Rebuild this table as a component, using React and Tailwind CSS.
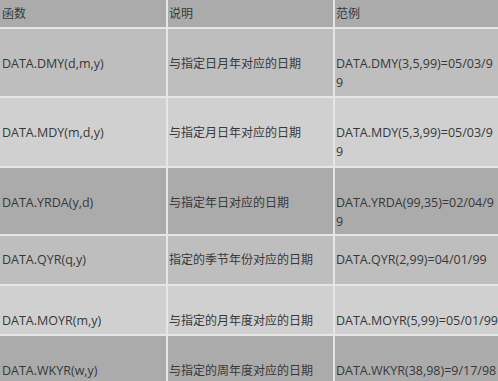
export default function App() {
  const rows = [
    { bg: "bg-[#bebebe]", h: "h-[67px]", pt: "pt-[25px]", a: "DATA.DMY(d,m,y)", b: "与指定日月年对应的日期", c: ["DATA.DMY(3,5,99)=05/03/9", "9"] },
    { bg: "bg-[#d0d0d0]", h: "h-[68px]", pt: "pt-[25px]", a: "DATA.MDY(m,d,y)", b: "与指定月日年对应的日期", c: ["DATA.MDY(5,3,99)=05/03/9", "9"] },
    { bg: "bg-[#ababab]", h: "h-[66px]", pt: "pt-[25px]", a: "DATA.YRDA(y,d)", b: "与指定年日对应的日期", c: ["DATA.YRDA(99,35)=02/04/9", "9"] },
    { bg: "bg-[#bebebe]", h: "h-[48px]", pt: "pt-[14px]", a: "DATA.QYR(q,y)", b: "指定的季节年份对应的日期", c: ["DATA.QYR(2,99)=04/01/99"] },
    { bg: "bg-[#d0d0d0]", h: "h-[48px]", pt: "pt-[25px]", a: "DATA.MOYR(m,y)", b: "与指定的月年度对应的日期", c: ["DATA.MOYR(5,99)=05/01/99"] },
    { bg: "bg-[#ababab]", h: "h-[60px]", pt: "pt-[25px]", a: "DATA.WKYR(w,y)", b: "与指定的周年度对应的日期", c: ["DATA.WKYR(38,98)=9/17/98"] },
  ];
  const font = { fontFamily: '"Open Sans", "Noto Sans CJK SC", sans-serif' };
  return (
    <div className="w-[498px] h-[381px] overflow-hidden bg-[#e6e6e6] leading-[19px] text-[#383838]" style={font}>
      <div className="grid grid-cols-[166px_165px_200px] gap-[2px] w-[535px]">
        <div className="bg-[#ababab] h-[27px] pt-[4px] pl-[2px] text-[12px]">函数</div>
        <div className="bg-[#ababab] h-[27px] pt-[4px] pl-[1px] text-[12px]">说明</div>
        <div className="bg-[#ababab] h-[27px] pt-[4px] pl-[1px] text-[12px]">范例</div>
        {rows.map((r, i) => (
          <>
            <div key={i + "a"} className={`${r.bg} ${r.h} ${r.pt} pl-[2px] whitespace-nowrap text-[12.5px]`}>{r.a}</div>
            <div key={i + "b"} className={`${r.bg} ${r.h} ${r.pt} pl-[1px] whitespace-nowrap text-[12px]`}>{r.b}</div>
            <div key={i + "c"} className={`${r.bg} ${r.h} ${r.pt} pl-[1px] whitespace-nowrap text-[12.5px]`}>
              {r.c.map((l, j) => (
                <div key={j}>{l}</div>
              ))}
            </div>
          </>
        ))}
      </div>
    </div>
  );
}
